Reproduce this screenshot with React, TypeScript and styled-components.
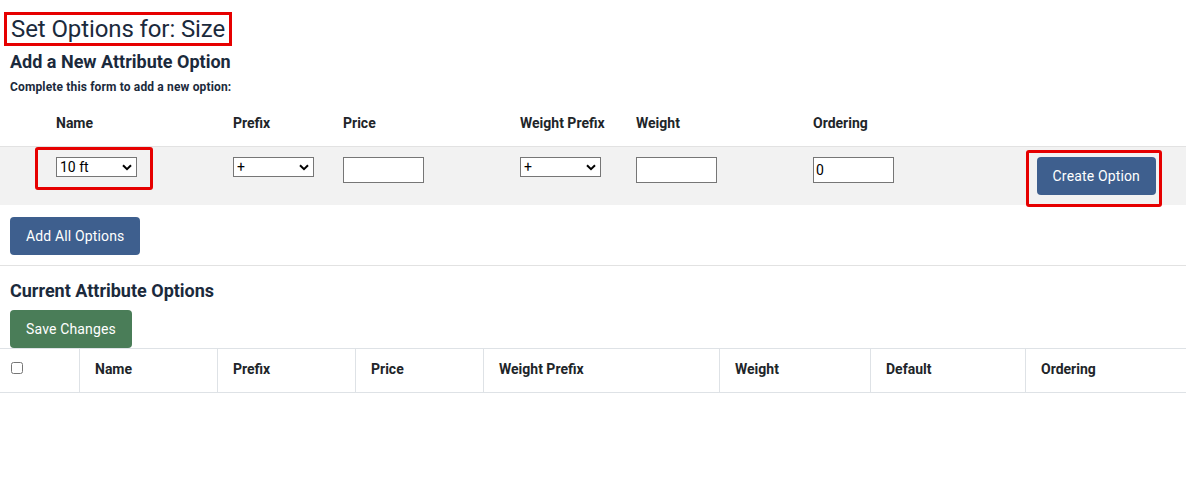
import React from "react";
import styled, { createGlobalStyle, css } from "styled-components";

const GlobalStyle = createGlobalStyle`
  html, body { margin: 0; padding: 0; background: #ffffff; }
  body {
    font-family: Roboto, "Noto Sans", "Liberation Sans", Arial, sans-serif;
    color: #212529;
    -webkit-font-smoothing: antialiased;
  }
  * { box-sizing: border-box; }
`;

const Page = styled.div`
  width: 1186px;
  display: flex;
  flex-direction: column;
  align-items: stretch;
`;

const TitleRow = styled.div`
  padding: 12px 0 0 4px;
`;

const Title = styled.h1`
  display: inline-block;
  margin: 0;
  padding: 0 4px 0 4px;
  border: 3px solid #e60000;
  font-size: 24px;
  font-weight: 400;
  line-height: 28px;
  letter-spacing: -0.1px;
  color: #1b2a3c;
`;

const SectionHeading = styled.h2<{ $top: number }>`
  margin: ${(p) => p.$top}px 0 0 10px;
  font-size: 18px;
  font-weight: 700;
  line-height: 22px;
  color: #1b2a3c;
`;

const Hint = styled.p`
  margin: 6px 0 0 10px;
  font-size: 12px;
  font-weight: 700;
  line-height: 16px;
  letter-spacing: 0.15px;
  color: #1b2a3c;
`;

const FormGrid = styled.div`
  display: grid;
  grid-template-columns: 177px 110px 177px 116px 177px 1fr auto;
  align-items: start;
  justify-items: start;
  padding: 0 30px 0 56px;
`;

const LabelRow = styled(FormGrid)`
  margin-top: 18px;
  height: 33px;
`;

const FieldLabel = styled.span`
  font-size: 14px;
  font-weight: 700;
  line-height: 20px;
  color: #212529;
`;

const InputRow = styled(FormGrid)`
  background: #f2f2f2;
  border-top: 1px solid #e2e2e2;
  padding-top: 10px;
  padding-bottom: 10px;
`;

const Highlight = styled.div<{ $t: number; $r: number; $b: number; $l: number }>`
  position: relative;
  display: inline-block;
  justify-self: start;
  &::after {
    content: "";
    position: absolute;
    top: -${(p) => p.$t}px;
    right: -${(p) => p.$r}px;
    bottom: -${(p) => p.$b}px;
    left: -${(p) => p.$l}px;
    border: 3px solid #e60000;
    border-radius: 3px;
    pointer-events: none;
  }
`;

const SelectWrap = styled.div`
  position: relative;
  display: inline-block;
  width: 81px;
  height: 20px;
`;

const Select = styled.select`
  appearance: none;
  -webkit-appearance: none;
  display: block;
  width: 81px;
  height: 20px;
  margin: 0;
  padding: 0 0 0 3px;
  border: 1px solid #767676;
  border-radius: 0;
  background: #ffffff;
  font-family: Roboto, "Liberation Sans", Arial, sans-serif;
  font-size: 14px;
  line-height: 18px;
  color: #000000;
`;

const Chevron = styled.svg`
  position: absolute;
  right: 5px;
  top: 7px;
  width: 10px;
  height: 7px;
  pointer-events: none;
`;

const TextInput = styled.input`
  width: 81px;
  height: 26px;
  margin: 0;
  padding: 0 2px;
  border: 1px solid #767676;
  border-radius: 0;
  background: #ffffff;
  font-family: Roboto, "Liberation Sans", Arial, sans-serif;
  font-size: 14px;
  color: #000000;
`;

const Button = styled.button<{ $tone: "blue" | "green" }>`
  display: inline-block;
  height: 38px;
  padding: 0 16px 1px;
  border: none;
  border-radius: 4px;
  font-family: Roboto, "Liberation Sans", Arial, sans-serif;
  font-size: 14px;
  font-weight: 400;
  letter-spacing: 0.15px;
  line-height: 36px;
  color: #ffffff;
  white-space: nowrap;
  ${(p) =>
    p.$tone === "blue"
      ? css`
          background: #3e5f8e;
        `
      : css`
          background: #4a7d58;
        `}
`;

const ButtonRow = styled.div<{ $top: number }>`
  display: flex;
  padding-left: 10px;
  margin-top: ${(p) => p.$top}px;
`;

const Rule = styled.hr`
  margin: 10px 0 0 0;
  border: none;
  border-top: 1px solid #e2e2e2;
  height: 0;
`;

const TableHead = styled.div`
  display: grid;
  grid-template-columns: 79px 138px 138px 128px 236px 151px 155px 1fr;
  border-top: 1px solid #dee2e6;
  border-bottom: 1px solid #dee2e6;
  height: 45px;
`;

const HeadCell = styled.div<{ $first?: boolean }>`
  display: flex;
  align-items: center;
  padding-left: ${(p) => (p.$first ? 11 : 15)}px;
  border-left: ${(p) => (p.$first ? "none" : "1px solid #dee2e6")};
  font-size: 14px;
  font-weight: 700;
  color: #212529;
  padding-bottom: ${(p) => (p.$first ? 6 : 4)}px;
`;

const Check = styled.input`
  margin: 0;
  width: 12px;
  height: 12px;
`;

function SelectBox({ value, options }: { value: string; options: string[] }) {
  return (
    <SelectWrap>
      <Select defaultValue={value}>
        {options.map((o) => (
          <option key={o} value={o}>
            {o}
          </option>
        ))}
      </Select>
      <Chevron viewBox="0 0 10 7">
        <path d="M1 1.2 L5 5.2 L9 1.2" fill="none" stroke="#000" strokeWidth="2" />
      </Chevron>
    </SelectWrap>
  );
}

const formLabels = ["Name", "Prefix", "Price", "Weight Prefix", "Weight", "Ordering"];
const tableHeads = ["Name", "Prefix", "Price", "Weight Prefix", "Weight", "Default", "Ordering"];

export default function App() {
  return (
    <Page>
      <GlobalStyle />
      <TitleRow>
        <Title>Set Options for: Size</Title>
      </TitleRow>
      <SectionHeading $top={5}>Add a New Attribute Option</SectionHeading>
      <Hint>Complete this form to add a new option:</Hint>

      <LabelRow>
        {formLabels.map((l) => (
          <FieldLabel key={l}>{l}</FieldLabel>
        ))}
      </LabelRow>

      <InputRow>
        <Highlight $t={10} $r={16} $b={13} $l={21}>
          <SelectBox value="10 ft" options={["10 ft", "12 ft", "14 ft"]} />
        </Highlight>
        <SelectBox value="+" options={["+", "-"]} />
        <TextInput type="text" defaultValue="" />
        <SelectBox value="+" options={["+", "-"]} />
        <TextInput type="text" defaultValue="" />
        <TextInput type="text" defaultValue="0" />
        <Highlight $t={7} $r={6} $b={12} $l={11}>
          <Button $tone="blue">Create Option</Button>
        </Highlight>
      </InputRow>

      <ButtonRow $top={12}>
        <Button $tone="blue">Add All Options</Button>
      </ButtonRow>

      <Rule />

      <SectionHeading $top={14}>Current Attribute Options</SectionHeading>

      <ButtonRow $top={8}>
        <Button $tone="green">Save Changes</Button>
      </ButtonRow>

      <TableHead>
        <HeadCell $first>
          <Check type="checkbox" />
        </HeadCell>
        {tableHeads.map((h) => (
          <HeadCell key={h}>{h}</HeadCell>
        ))}
      </TableHead>
    </Page>
  );
}
